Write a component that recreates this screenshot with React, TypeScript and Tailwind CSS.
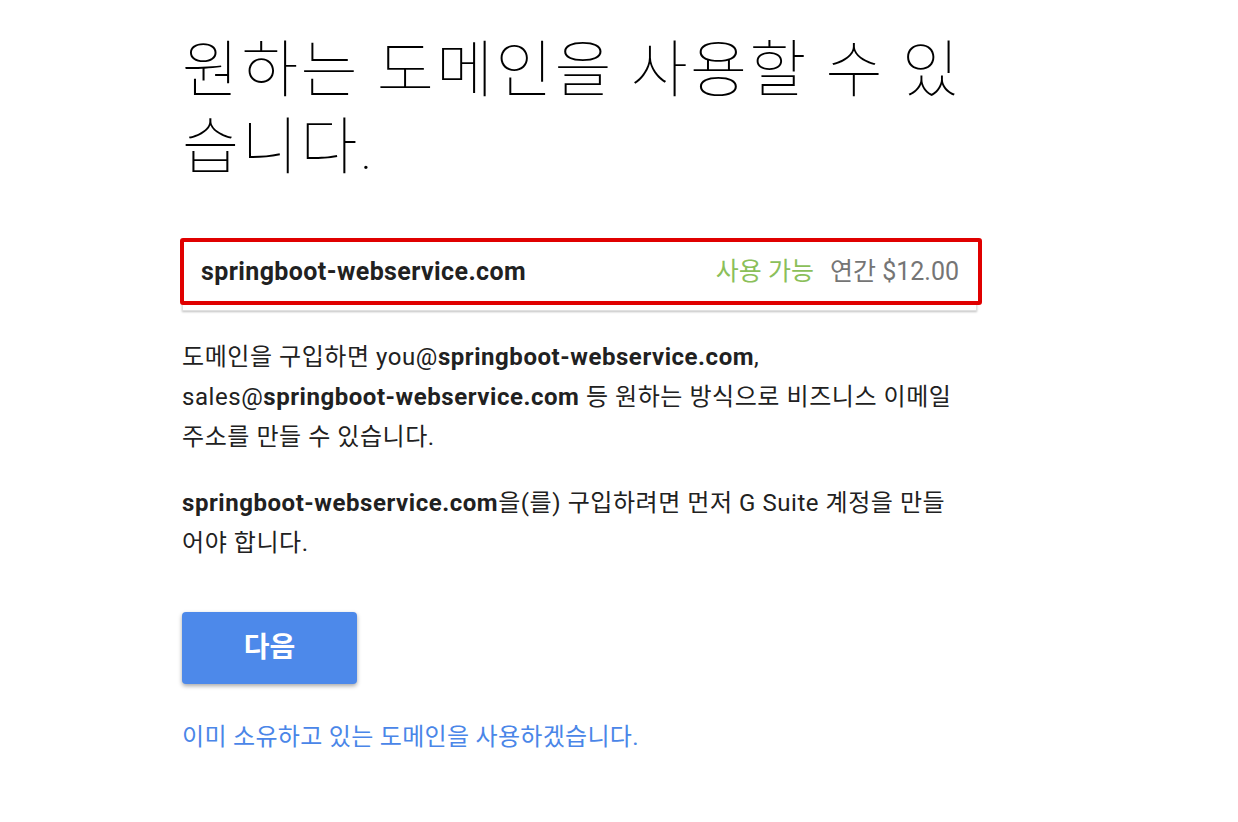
import React from 'react';

const font = { fontFamily: 'Roboto, "Noto Sans CJK KR", sans-serif' };

export default function App() {
  return (
    <div className="min-h-screen bg-white text-[#212121]" style={font}>
      <div className="ml-[182px] w-[795px] pt-[32px]">
        <h1 className="text-[62px] leading-[77px] font-thin text-black tracking-[2.2px] whitespace-nowrap">
          원하는 도메인을 사용할 수 있<br />
          습니다.
        </h1>

        {/* domain result card */}
        <div className="relative mt-[55px] h-[70px] bg-white shadow-[0_1px_2px_rgba(0,0,0,0.25)] border border-[#e0e0e0]">
          <div className="absolute -left-[3px] -right-[6px] -top-[4px] bottom-[5px] border-[4px] border-[#e00000] rounded-[3px] bg-white flex items-center justify-between pl-[17px] pr-[19px]">
            <span className="text-[25px] font-bold text-[#212121] tracking-[0.4px]">springboot-webservice.com</span>
            <span className="flex items-center gap-[16px] text-[25px]">
              <span className="text-[#8bbf5a]">사용 가능</span>
              <span className="text-[#757575]">연간 $12.00</span>
            </span>
          </div>
        </div>

        <p className="mt-[26px] text-[24px] leading-[40px] tracking-[0.55px] whitespace-nowrap">
          도메인을 구입하면 you@<b>springboot-webservice.com</b>,<br />
          sales@<b>springboot-webservice.com</b> 등 원하는 방식으로 비즈니스 이메일<br />
          주소를 만들 수 있습니다.
        </p>

        <p className="mt-[26px] text-[24px] leading-[40px] tracking-[0.55px] whitespace-nowrap">
          <b>springboot-webservice.com</b>을(를) 구입하려면 먼저 G Suite 계정을 만들<br />
          어야 합니다.
        </p>

        <button className="mt-[49px] w-[175px] h-[72px] rounded-[4px] bg-[#4d89ea] text-white text-[28px] font-bold shadow-[0_2px_4px_rgba(0,0,0,0.35)]">
          다음
        </button>

        <div className="mt-[38px] leading-[30px]">
          <a className="text-[24px] text-[#4a86e8] tracking-[0.3px]">이미 소유하고 있는 도메인을 사용하겠습니다.</a>
        </div>
      </div>
    </div>
  );
}
